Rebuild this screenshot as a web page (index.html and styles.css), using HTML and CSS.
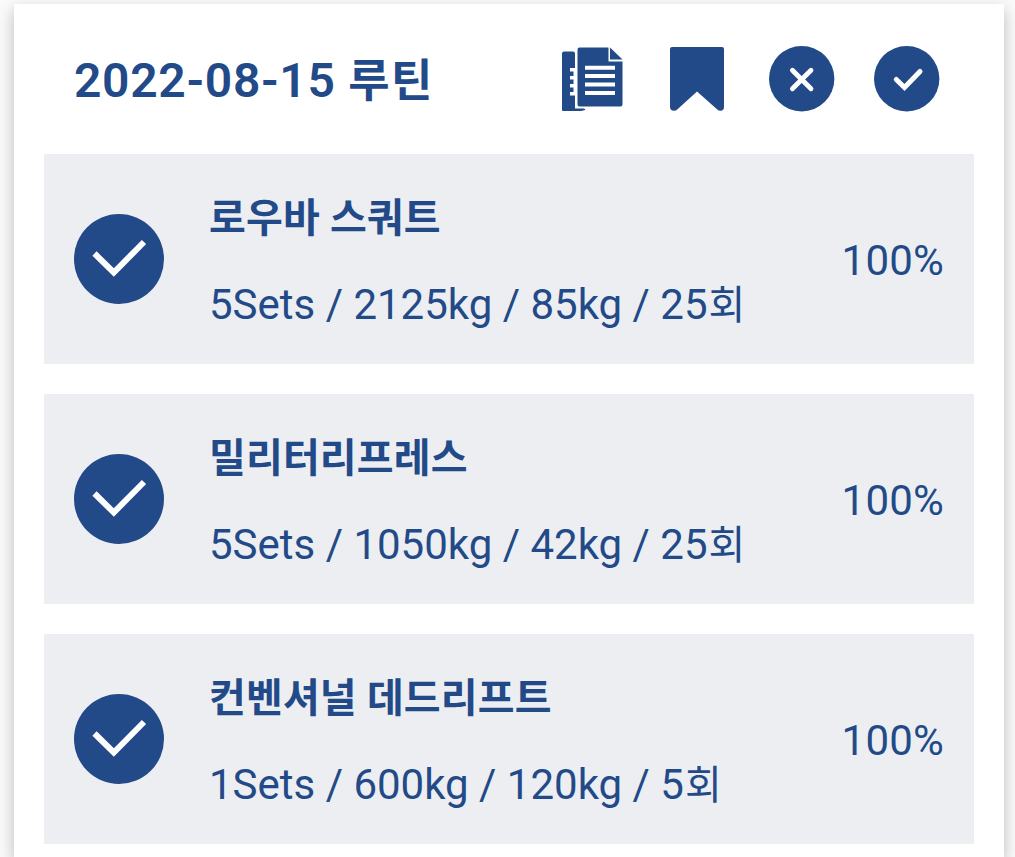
FILE: index.html
```html
<!DOCTYPE html>
<html lang="ko">
<head>
<meta charset="UTF-8">
<meta name="viewport" content="width=device-width, initial-scale=1.0">
<title>루틴</title>
<link rel="stylesheet" href="styles.css">
</head>
<body>
<div class="card">
  <div class="card-header">
    <h1>2022-08-15 <span class="title-label">루틴</span></h1>
    <div class="actions">
      <button class="icon-button" aria-label="copy">
        <svg width="62" height="66" viewBox="0 0 62 66">
          <path fill="#234a88" d="M2 5.500H11Q13 5.500 13 7.500V22H8V25.500H11.500V30H8V33.500H11.500V38H8V41.500H11.500V46H8V49.500H13V62.500H22Q24 63 23 64L19 65H1Q0 65 0 64V7.500Q0 5.500 2 5.500Z"/>
          <path fill="#234a88" d="M17.500 1.500H46.500V15.500H60.500V58.500Q60.500 60.500 58.500 60.500H17.500Q15.500 60.500 15.500 58.500V3.500Q15.500 1.500 17.500 1.500Z"/>
          <path fill="#234a88" d="M48 1.500L60.500 13.500H48Z"/>
          <path stroke="#fff" stroke-width="4" d="M23 21.700H53M23 30H53M23 38.500H53M23 47H53"/>
        </svg>
      </button>
      <button class="icon-button" aria-label="bookmark">
        <svg width="54" height="66" viewBox="0 0 54 66">
          <path fill="#234a88" d="M2 1H52Q54 1 54 3V61Q54 64.700 50.500 64.700Q48.500 64.700 47 63.200L27 45.500L7.500 63.200Q6 64.700 4 64.700Q0 64.700 0 61V3Q0 1 2 1Z"/>
        </svg>
      </button>
      <button class="icon-button" aria-label="cancel">
        <svg width="66" height="66" viewBox="0 0 66 66">
          <circle cx="32.700" cy="32.700" r="32.700" fill="#234a88"/>
          <path stroke="#fff" stroke-width="4.800" stroke-linecap="round" d="M23.400 24.200L42 42.800M42 24.200L23.400 42.800"/>
        </svg>
      </button>
      <button class="icon-button" aria-label="done">
        <svg width="66" height="66" viewBox="0 0 66 66">
          <circle cx="32.700" cy="32.700" r="32.700" fill="#234a88"/>
          <path fill="none" stroke="#fff" stroke-width="5" stroke-linecap="round" d="M22.300 33.500L30.500 41.500L46 25.500"/>
        </svg>
      </button>
    </div>
  </div>
  <div class="routine-list">
    <div class="routine">
      <svg class="check" width="90" height="90" viewBox="0 0 90 90">
        <circle cx="45" cy="45" r="45" fill="#234a88"/>
        <path fill="none" stroke="#fff" stroke-width="6" d="M20.500 39.500L39.800 58.500L70 28"/>
      </svg>
      <div class="info">
        <h2>로우바 스쿼트</h2>
        <p>5Sets / 2125kg / 85kg / 25<span class="unit">회</span></p>
      </div>
      <div class="percent">100%</div>
    </div>
    <div class="routine">
      <svg class="check" width="90" height="90" viewBox="0 0 90 90">
        <circle cx="45" cy="45" r="45" fill="#234a88"/>
        <path fill="none" stroke="#fff" stroke-width="6" d="M20.500 39.500L39.800 58.500L70 28"/>
      </svg>
      <div class="info">
        <h2>밀리터리프레스</h2>
        <p>5Sets / 1050kg / 42kg / 25<span class="unit">회</span></p>
      </div>
      <div class="percent">100%</div>
    </div>
    <div class="routine">
      <svg class="check" width="90" height="90" viewBox="0 0 90 90">
        <circle cx="45" cy="45" r="45" fill="#234a88"/>
        <path fill="none" stroke="#fff" stroke-width="6" d="M20.500 39.500L39.800 58.500L70 28"/>
      </svg>
      <div class="info">
        <h2>컨벤셔널 데드리프트</h2>
        <p>1Sets / 600kg / 120kg / 5<span class="unit">회</span></p>
      </div>
      <div class="percent">100%</div>
    </div>
  </div>
</div>
</body>
</html>
```

FILE: styles.css
```css
* {
  box-sizing: border-box;
}
body {
  margin: 0;
  height: 857px;
  overflow: hidden;
  padding: 4px 11px 0 14px;
  background-color: #fafafa;
  color: #234a88;
  font-family: Roboto, "Noto Sans CJK KR", sans-serif;
}
h1, h2, p {
  margin: 0;
}
.card {
  height: 853px;
  padding: 0 30px;
  background-color: #fff;
  box-shadow: 0 6px 15px rgba(0, 0, 0, 0.25);
}
.card-header {
  display: flex;
  align-items: center;
  justify-content: space-between;
  height: 150px;
  padding: 0 34px 0 30px;
}
.card-header h1 {
  padding-top: 4px;
  font-size: 48px;
  line-height: 60px;
  font-weight: 600;
  letter-spacing: 0.7px;
  white-space: nowrap;
}
.title-label {
  font-size: 45px;
  font-weight: 700;
  letter-spacing: 1.4px;
}
.actions {
  display: flex;
  align-items: center;
}
.icon-button {
  display: block;
  padding: 0;
  border: none;
  background: none;
  cursor: pointer;
}
.icon-button svg {
  display: block;
}
.icon-button:nth-child(2) {
  margin-left: 46px;
}
.icon-button:nth-child(3) {
  margin-left: 45px;
}
.icon-button:nth-child(4) {
  margin-left: 39px;
}
.routine-list {
  display: flex;
  flex-direction: column;
  gap: 30px;
}
.routine {
  display: flex;
  align-items: center;
  height: 210px;
  padding: 0 30px;
  background-color: #edeef2;
}
.check {
  flex: none;
}
.info {
  flex: 1;
  margin-left: 45px;
  padding-top: 7px;
  white-space: nowrap;
}
.info h2 {
  font-size: 40px;
  line-height: 60px;
  font-weight: 700;
  letter-spacing: 0.15px;
  margin-bottom: 26px;
}
.info p {
  font-size: 42px;
  line-height: 60px;
}
.unit {
  margin-left: 1px;
  font-size: 40px;
}
.percent {
  padding-top: 4px;
  font-size: 42px;
  line-height: 60px;
  letter-spacing: 0.2px;
}
```
